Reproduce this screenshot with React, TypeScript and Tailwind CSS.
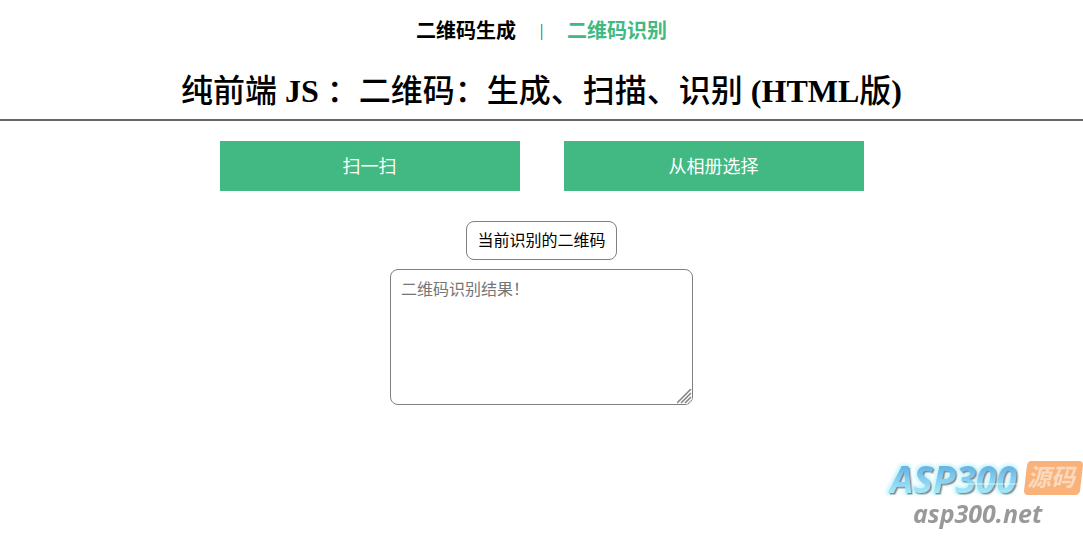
import clsx from 'clsx'

function NavLink({ href, label, active }: { href: string; label: string; active?: boolean }) {
  return (
    <a href={href} className={clsx('text-xl font-bold', active ? 'text-[#42b983]' : 'text-black')}>
      {label}
    </a>
  )
}

function ActionButton({ label }: { label: string }) {
  return (
    <button
      type="button"
      className="h-[50px] w-[300px] cursor-pointer bg-[#42b983] pt-0.5 font-['Liberation_Sans','Noto_Sans_CJK_SC',sans-serif] text-lg text-white"
    >
      {label}
    </button>
  )
}

function ResizeGrip() {
  return (
    <svg
      width="15"
      height="15"
      viewBox="0 0 15 15"
      aria-hidden="true"
      className="pointer-events-none absolute right-px bottom-px rounded-br-[7px] bg-white"
    >
      <path d="M0 14L14 0M4 14L14 4M8 14L14 8M12 14L14 12" stroke="#808080" strokeWidth="1.5" />
    </svg>
  )
}

function Watermark() {
  return (
    <div className="pointer-events-none fixed right-0 bottom-0">
      <svg width="200" height="84" viewBox="0 0 200 84" role="img" aria-label="ASP300源码 asp300.net">
        <defs>
          <linearGradient id="logo-fill" x1="0" y1="0" x2="0" y2="1">
            <stop offset="0.2" stopColor="#5aaee0" />
            <stop offset="0.5" stopColor="#82cdf0" />
            <stop offset="0.8" stopColor="#a5ecf8" />
          </linearGradient>
          <filter id="logo-glow" x="-10%" y="-30%" width="120%" height="160%">
            <feDropShadow dx="1.5" dy="1.5" stdDeviation="0.4" floodColor="#8f8488" result="shaded" />
            <feMorphology in="SourceAlpha" operator="dilate" radius="2" />
            <feGaussianBlur stdDeviation="1.5" result="halo" />
            <feFlood floodColor="#cdf6fc" />
            <feComposite in2="halo" operator="in" result="glow" />
            <feMerge>
              <feMergeNode in="glow" />
              <feMergeNode in="shaded" />
            </feMerge>
          </filter>
        </defs>
        <g fontFamily="'Open Sans', sans-serif" fontWeight="700" fontStyle="italic">
          <text x="7" y="41" fontSize="37" fill="url(#logo-fill)" filter="url(#logo-glow)">
            ASP300
          </text>
          <text x="30" y="71" fontSize="25" fill="#999999">
            asp300.net
          </text>
        </g>
        <path d="M84 32H134" stroke="#ffffff" strokeWidth="1" opacity="0.7" />
        <path
          d="M148 9H196Q200 9 200 13L197 39Q196 43 192 43H145Q141 43 141 39L144 13Q145 9 148 9Z"
          fill="#fab27b"
        />
        <text
          x="144"
          y="34"
          fontSize="24"
          fontWeight="700"
          fontStyle="italic"
          fontFamily="'Noto Sans CJK SC', sans-serif"
          fill="#fbd9bd"
        >
          源码
        </text>
      </svg>
    </div>
  )
}

export default function App() {
  return (
    <div className="bg-white font-['Liberation_Serif','Noto_Sans_CJK_SC',serif] text-black">
      <nav className="flex items-center justify-center gap-6 pt-[17px] leading-7">
        <NavLink href="#create" label="二维码生成" />
        <span className="text-base text-green-900">|</span>
        <NavLink href="#scan" label="二维码识别" active />
      </nav>

      <h1 className="mt-6 text-center text-[32px] leading-11 font-medium">
        纯前端 <b>JS</b> ：二维码：生成、扫描、识别 <b>(HTML</b>版<b>)</b>
      </h1>
      <hr className="mt-[6px] border-t-2 border-[#666666]" />

      <main className="flex flex-col items-center pt-5">
        <div className="flex flex-wrap justify-center gap-11">
          <ActionButton label="扫一扫" />
          <ActionButton label="从相册选择" />
        </div>

        <label
          htmlFor="result"
          className="mt-[30px] rounded-lg border border-[#808080] px-[10px] py-[7px] text-base leading-[23px]"
        >
          当前识别的二维码
        </label>
        <div className="relative mt-[9px]">
          <textarea
            id="result"
            placeholder="二维码识别结果！"
            className="block h-[136px] w-[303px] rounded-lg border border-[#808080] px-[10px] py-2 text-base placeholder:text-[#757575]"
          />
          <ResizeGrip />
        </div>
      </main>

      <Watermark />
    </div>
  )
}
